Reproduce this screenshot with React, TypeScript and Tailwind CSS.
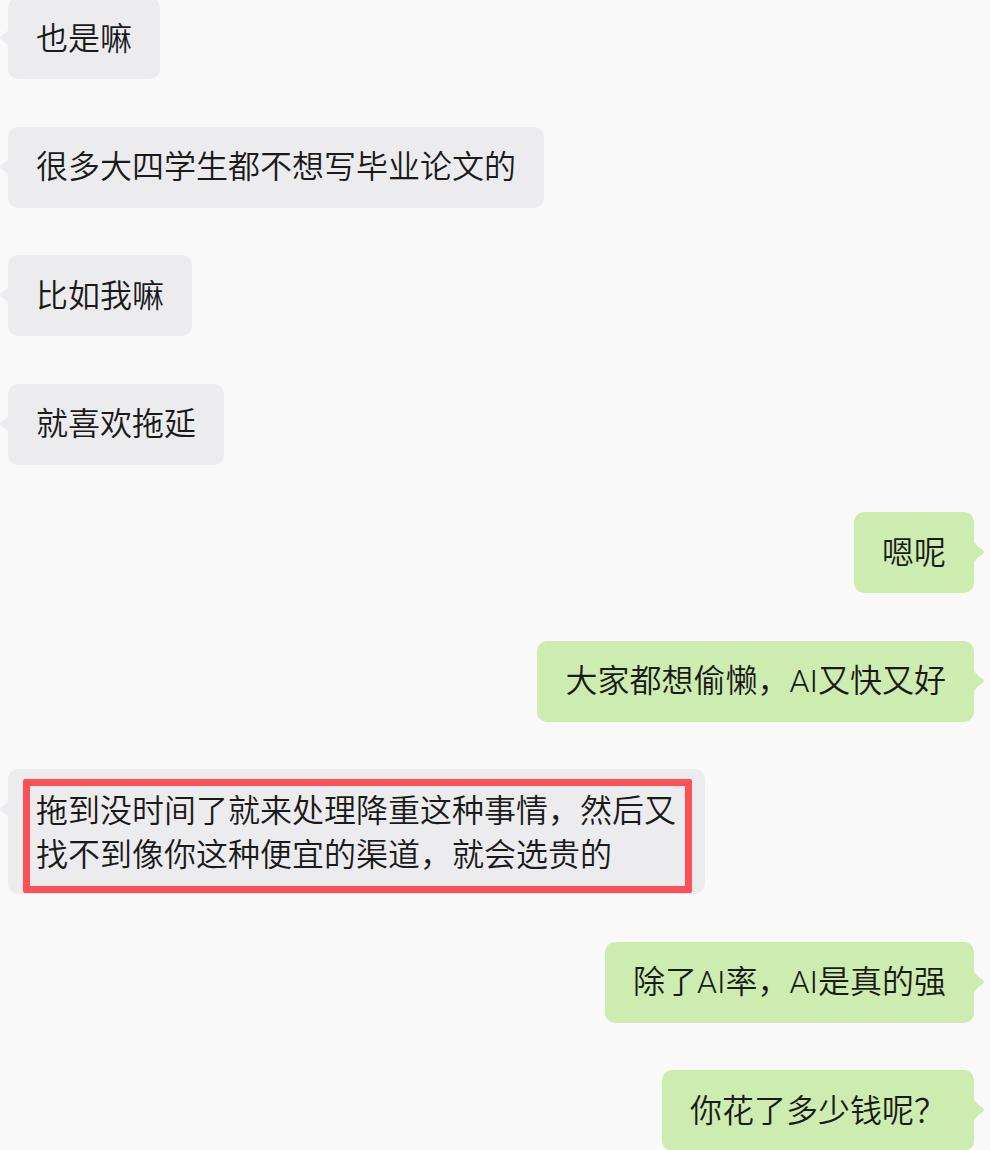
import React from 'react';

type Msg = { side: 'left' | 'right'; text: React.ReactNode; marked?: boolean };

const messages: Msg[] = [
    { side: 'left', text: '也是嘛' },
    { side: 'left', text: '很多大四学生都不想写毕业论文的' },
    { side: 'left', text: '比如我嘛' },
    { side: 'left', text: '就喜欢拖延' },
    { side: 'right', text: '嗯呢' },
    { side: 'right', text: '大家都想偷懒，AI又快又好' },
    {
        side: 'left',
        marked: true,
        text: (
            <>
                拖到没时间了就来处理降重这种事情，然后又
                <br />
                找不到像你这种便宜的渠道，就会选贵的
            </>
        ),
    },
    { side: 'right', text: '除了AI率，AI是真的强' },
    { side: 'right', text: '你花了多少钱呢？' },
];

function Tail({ side }: { side: 'left' | 'right' }) {
    const fill = side === 'left' ? '#ececee' : '#cdedb0';
    return (
        <svg
            width="12"
            height="26"
            viewBox="0 0 12 26"
            className={side === 'left' ? 'absolute top-[27px] left-[-9px] -scale-x-100' : 'absolute top-[27px] right-[-11px]'}
        >
            <path d="M0 0 C1.5 4 4 7.5 10 11.2 Q12 13 10 14.8 C4 18.5 1.5 22 0 26 Z" fill={fill} />
        </svg>
    );
}

function Bubble({ msg }: { msg: Msg }) {
    const left = msg.side === 'left';
    const base = left ? 'bg-[#ececee]' : 'bg-[#cdedb0]';
    return (
        <div className={`flex ${left ? 'justify-start' : 'justify-end'}`}>
            <div className={`relative rounded-[10px] ${base} ${msg.marked ? 'pl-[15px] pr-[13px] pt-[10px] pb-[1px]' : 'px-[28px] py-[18.5px]'}`}>
                <Tail side={msg.side} />
                {msg.marked ? (
                    <div className="rounded-[2px] border-[7px] border-[#fd5157] pl-[6px] pr-[9px] pt-[3px] pb-[9px] leading-[44px]">
                        {msg.text}
                    </div>
                ) : (
                    <div className="leading-[44px] whitespace-nowrap">{msg.text}</div>
                )}
            </div>
        </div>
    );
}

export default function App() {
    return (
        <div
            className="h-[1150px] w-[990px] overflow-hidden bg-[#f9f9f9] text-[32px] font-[350] text-[#1a1a1a]"
            style={{ fontFamily: 'Roboto, "Noto Sans CJK SC", "Noto Sans", sans-serif' }}
        >
            <div className="mt-[-2px] flex flex-col gap-[47.5px] pl-[8px] pr-[16px]">
                {messages.map((m, i) => (
                    <Bubble key={i} msg={m} />
                ))}
            </div>
        </div>
    );
}
